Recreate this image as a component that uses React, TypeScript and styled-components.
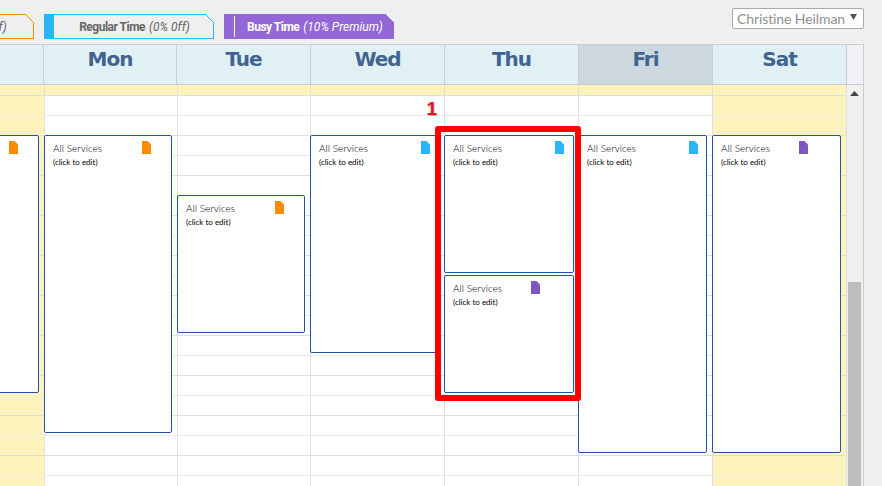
import styled, { createGlobalStyle } from "styled-components";

const GlobalStyle = createGlobalStyle`
  html, body {
    margin: 0;
    padding: 0;
    background: #efefef;
    overflow: hidden;
  }
`;

const Page = styled.div`
  position: relative;
  width: 882px;
  height: 486px;
  overflow: hidden;
  background: #efefef;
`;

const TopBar = styled.div`
  display: flex;
  justify-content: space-between;
  align-items: flex-start;
  height: 44px;
  padding: 14px 18px 0 0;
  box-sizing: border-box;
`;

const Legend = styled.div`
  display: flex;
  gap: 10px;
  margin-left: -136px;
`;

const LegendItem = styled.div<{ $color: string; $filled?: boolean }>`
  position: relative;
  box-sizing: border-box;
  width: 170px;
  height: 25px;
  padding-left: ${(p) => (p.$filled ? "12px" : "2px")};
  display: flex;
  align-items: center;
  justify-content: center;
  border: 1px solid ${(p) => p.$color};
  border-left-width: ${(p) => (p.$filled ? "1px" : "10px")};
  background: ${(p) => (p.$filled ? p.$color : "transparent")};
  color: ${(p) => (p.$filled ? "#fff" : "#666")};
  font-family: Roboto, "Liberation Sans", sans-serif;
  font-size: 12px;
  font-weight: 700;
  letter-spacing: -0.5px;
  white-space: nowrap;

  em {
    font-weight: 400;
    margin-left: 4px;
    letter-spacing: 0;
  }

  &::after {
    content: "";
    position: absolute;
    top: -1px;
    right: -1px;
    width: 9px;
    height: 9px;
    background: linear-gradient(
      to top right,
      transparent 46%,
      ${(p) => p.$color} 46%,
      ${(p) => p.$color} 54%,
      #efefef 54%
    );
  }
`;

const LegendRule = styled.span`
  position: absolute;
  left: 9px;
  top: 1px;
  bottom: 1px;
  width: 1px;
  background: #fff;
`;

const StaffSelect = styled.div`
  box-sizing: border-box;
  width: 132px;
  height: 21px;
  margin-top: -6px;
  padding: 0 0 0 4px;
  display: flex;
  align-items: center;
  justify-content: space-between;
  background: #fff;
  border: 1px solid #aaa;
  border-radius: 2px;
  color: #8f8f8f;
  font-family: Lato, "Liberation Sans", sans-serif;
  font-size: 14px;
  letter-spacing: -0.1px;
  white-space: nowrap;
`;

const SelectArrow = styled.svg`
  width: 7px;
  height: 6px;
  margin: 0 6px 4px 0;
  fill: #555;
`;

const Calendar = styled.div`
  margin-left: -91px;
  width: 955px;
`;

const HeaderRow = styled.div`
  display: grid;
  grid-template-columns: 135px 133px 134px 134px 134px 134px 134px 1fr;
  height: 41px;
  box-sizing: border-box;
  border-top: 1px solid #ccc;
  border-bottom: 1px solid #ccc;
  border-right: 1px solid #ccc;
`;

const DayHead = styled.div<{ $today?: boolean }>`
  border-right: 1px solid #ccc;
  background: ${(p) => (p.$today ? "#ccd8dd" : "#e0f0f4")};
  color: #406490;
  font-family: "DejaVu Sans", Verdana, sans-serif;
  font-size: 20px;
  font-weight: 700;
  letter-spacing: -1px;
  line-height: 28px;
  text-align: center;
`;

const HeaderGap = styled.div`
  background: #f0f0f6;
`;

const Body = styled.div`
  display: flex;
  height: 401px;
  overflow: hidden;
`;

const DayColumn = styled.div<{ $width: number }>`
  position: relative;
  box-sizing: border-box;
  flex: none;
  width: ${(p) => p.$width}px;
  border-right: 1px solid #e0e0e0;
`;

const Slot = styled.div<{ $off: boolean; $short?: boolean; $strong?: boolean }>`
  box-sizing: border-box;
  height: ${(p) => (p.$short ? 11 : 20)}px;
  background: ${(p) => (p.$off ? "#fff3bd" : "#fff")};
  border-bottom: 1px solid ${(p) => (p.$strong ? "#dedede" : "#ececec")};
`;

const EventCard = styled.div<{ $top: number; $height: number; $width: number }>`
  position: absolute;
  left: -1px;
  top: ${(p) => p.$top}px;
  box-sizing: border-box;
  width: ${(p) => p.$width}px;
  height: ${(p) => p.$height}px;
  padding: 6px 8px;
  background: #fff;
  border: 1px solid #2350a8;
  border-radius: 2px;
  font-family: Lato, "Liberation Sans", sans-serif;
  color: #000;
`;

const EventTitle = styled.div`
  font-size: 10px;
  font-weight: 300;
  line-height: 13px;
`;

const EventHint = styled.div`
  margin-top: 1px;
  font-size: 8px;
  font-weight: 400;
  line-height: 13px;
`;

const EventIcon = styled.svg<{ $right: number }>`
  position: absolute;
  top: 5px;
  right: ${(p) => p.$right}px;
  width: 9px;
  height: 13px;
`;

const ScrollTrack = styled.div`
  position: relative;
  flex: none;
  width: 17px;
  box-sizing: border-box;
  border-right: 1px solid #ccc;
  background: #f0f0f0;
`;

const ScrollUp = styled.svg`
  position: absolute;
  top: 6px;
  left: 3px;
  width: 9px;
  height: 5px;
  fill: #444;
`;

const ScrollThumb = styled.div`
  position: absolute;
  left: 1px;
  top: 197px;
  bottom: 0;
  width: 13px;
  background: #bdbdbd;
`;

const Callout = styled.div`
  position: absolute;
  left: 427px;
  top: 99px;
  color: #e8101a;
  font-family: "Liberation Sans", Arial, sans-serif;
  font-size: 18px;
  font-weight: 700;
  line-height: 20px;
  text-shadow: -1px 0 #bbb, 0 1px #bbb, 1px 1px #ccc;
`;

const HighlightBox = styled.div`
  position: absolute;
  left: 435px;
  top: 126px;
  width: 146px;
  height: 275px;
  box-sizing: border-box;
  border: 6px solid #ff0000;
  border-radius: 3px;
`;

const BLUE = "#29b6f6";
const ORANGE = "#fb8c00";
const PURPLE = "#7e57c2";

type Shift = { top: number; height: number; width: number; color: string; right: number };

const days: {
  name: string;
  width: number;
  off: boolean;
  today?: boolean;
  shifts: Shift[];
}[] = [
  {
    name: "Sun",
    width: 136,
    off: true,
    shifts: [{ top: 50, height: 258, width: 131, color: ORANGE, right: 20 }],
  },
  {
    name: "Mon",
    width: 133,
    off: false,
    shifts: [{ top: 50, height: 298, width: 128, color: ORANGE, right: 20 }],
  },
  {
    name: "Tue",
    width: 133,
    off: false,
    shifts: [{ top: 110, height: 138, width: 128, color: ORANGE, right: 20 }],
  },
  {
    name: "Wed",
    width: 134,
    off: false,
    shifts: [{ top: 50, height: 218, width: 129, color: BLUE, right: 8 }],
  },
  {
    name: "Thu",
    width: 134,
    off: false,
    shifts: [
      { top: 50, height: 138, width: 130, color: BLUE, right: 9 },
      { top: 190, height: 118, width: 130, color: PURPLE, right: 33 },
    ],
  },
  {
    name: "Fri",
    width: 134,
    off: false,
    today: true,
    shifts: [{ top: 50, height: 318, width: 129, color: BLUE, right: 8 }],
  },
  {
    name: "Sat",
    width: 134,
    off: true,
    shifts: [{ top: 50, height: 318, width: 129, color: PURPLE, right: 32 }],
  },
];

const slots = Array.from({ length: 20 }, (_, i) => i);

function App() {
  return (
    <Page>
      <GlobalStyle />
      <TopBar>
        <Legend>
          <LegendItem $color="#fb8c00">
            Slow Time <em>(10% Off)</em>
          </LegendItem>
          <LegendItem $color={BLUE}>
            Regular Time <em>(0% 0ff)</em>
          </LegendItem>
          <LegendItem $color="#9368d6" $filled>
            <LegendRule />
            Busy Time <em>(10% Premium)</em>
          </LegendItem>
        </Legend>
        <StaffSelect>
          Christine Heilman
          <SelectArrow viewBox="0 0 7 6">
            <path d="M0 0h7L3.5 6z" />
          </SelectArrow>
        </StaffSelect>
      </TopBar>
      <Calendar>
        <HeaderRow>
          {days.map((day) => (
            <DayHead key={day.name} $today={day.today}>
              {day.name}
            </DayHead>
          ))}
          <HeaderGap />
        </HeaderRow>
        <Body>
          {days.map((day) => (
            <DayColumn key={day.name} $width={day.width}>
              <Slot $off $short $strong />
              {slots.map((i) => (
                <Slot key={i} $off={day.off} $strong={i % 2 === 1} />
              ))}
              {day.shifts.map((shift) => (
                <EventCard
                  key={shift.top}
                  $top={shift.top}
                  $height={shift.height}
                  $width={shift.width}
                >
                  <EventTitle>All Services</EventTitle>
                  <EventHint>(click to edit)</EventHint>
                  <EventIcon $right={shift.right} viewBox="0 0 9 13">
                    <path d="M0 0h5.5L9 3.5V13H0z" fill={shift.color} />
                  </EventIcon>
                </EventCard>
              ))}
            </DayColumn>
          ))}
          <ScrollTrack>
            <ScrollUp viewBox="0 0 9 5">
              <path d="M4.5 0L9 5H0z" />
            </ScrollUp>
            <ScrollThumb />
          </ScrollTrack>
        </Body>
      </Calendar>
      <Callout>1</Callout>
      <HighlightBox />
    </Page>
  );
}

export default App;
